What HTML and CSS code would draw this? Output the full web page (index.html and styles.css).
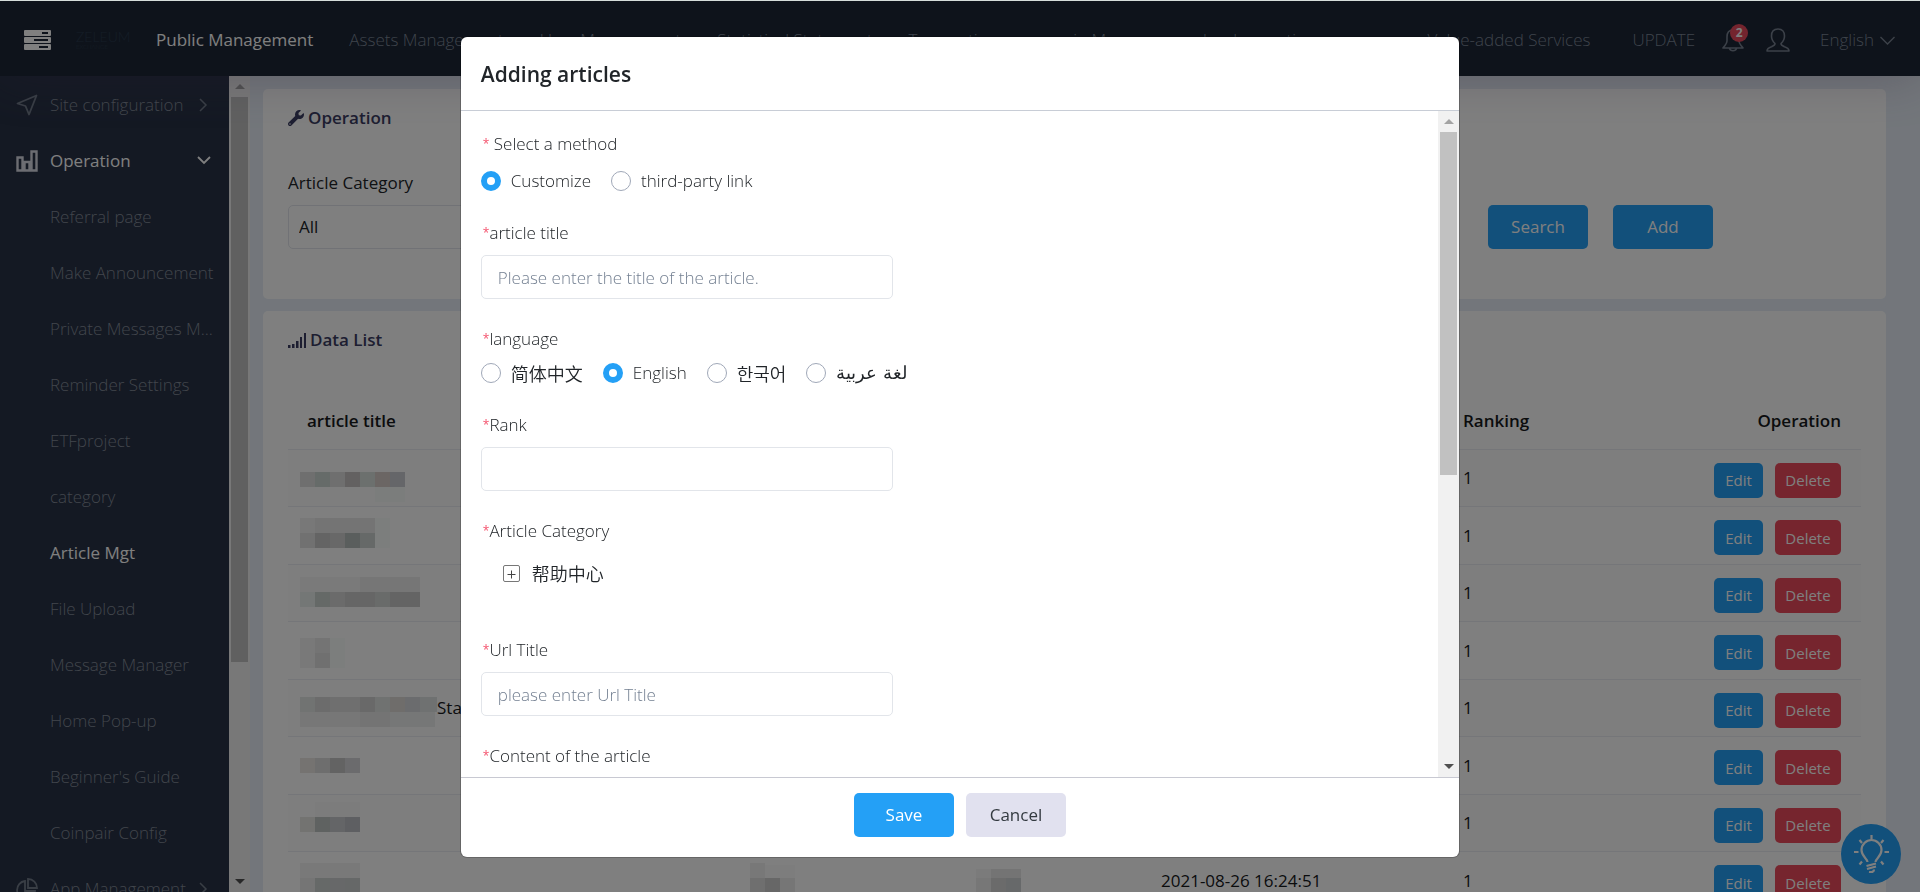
FILE: index.html
```html
<!DOCTYPE html>
<html lang="en">
<head>
<meta charset="utf-8">
<title>Article Mgt</title>
<link rel="stylesheet" href="styles.css">
</head>
<body>
<div class="app">
  <header class="topbar">
    <button class="icon-btn menu-btn" aria-label="Toggle menu">
      <svg width="27" height="20" viewBox="0 0 27 20"><rect width="27" height="6" rx="1" fill="#fff"/><rect y="7" width="27" height="6" rx="1" fill="#fff"/><rect y="14" width="27" height="6" rx="1" fill="#fff"/><path d="M18 3h6M10 10h14M15 17h9" stroke="#1d2736" stroke-width="2"/></svg>
    </button>
    <div class="brand"><span class="brand-name">ZELEUM</span><span class="brand-sub">EXCHANGE</span></div>
    <nav class="topnav">
      <a class="active" href="#">Public Management</a>
      <a href="#">Assets Management</a>
      <a href="#">User Management</a>
      <a href="#">Statistical Statement</a>
      <a href="#">Transaction</a>
      <a href="#">margin Manager</a>
      <a href="#">cloud operation</a>
    </nav>
    <nav class="topnav topnav-end">
      <a href="#">Value-added Services</a>
      <a href="#">UPDATE</a>
    </nav>
    <button class="icon-btn bell" aria-label="Notifications">
      <svg width="22" height="24" viewBox="0 0 22 24" fill="none" stroke="#788292" stroke-width="1.6" stroke-linejoin="round"><path d="M11 2C7 2 5 5 5 9v4c0 3-2 4-4 7h20c-2-3-4-4-4-7V9c0-4-2-7-6-7zM7.500 20.500c1 3 6 3 7 0"/></svg>
      <span class="badge">2</span>
    </button>
    <button class="icon-btn user" aria-label="Account">
      <svg width="24" height="24" viewBox="0 0 24 24" fill="none" stroke="#788292" stroke-width="1.6" stroke-linejoin="round"><path d="M12 1C7.500 1 5.500 4 5.500 8c0 3 1.200 5.500 3.500 7.500 0 2-1 2.300-3.500 3.200C2.500 19.700 1 20.500 1 23h22c0-2.500-1.500-3.300-4.500-4.300-2.500-.9-3.500-1.200-3.500-3.200 2.300-2 3.500-4.500 3.500-7.500 0-4-2-7-6.500-7z"/></svg>
    </button>
    <button class="icon-btn lang">English
      <svg width="15" height="9" viewBox="0 0 15 9" fill="none" stroke="#788292" stroke-width="1.400"><path d="M.5 1l7 7 7-7"/></svg>
    </button>
  </header>

  <div class="shell">
    <aside class="sidebar">
      <ul class="menu">
        <li><a href="#"><svg class="mi" width="22" height="22" viewBox="0 0 22 22" fill="none" stroke="#727c8b" stroke-width="1.800" stroke-linejoin="round"><path d="M20.500 1.500L1.500 9.500l8 2.500 3.500 8.500z"/></svg><span>Site configuration</span><svg class="chev" width="9" height="14" viewBox="0 0 9 14" fill="none" stroke="#727c8b" stroke-width="1.500"><path d="M1 1l6 6-6 6"/></svg></a></li>
        <li><a class="active" href="#"><svg class="mi" width="22" height="22" viewBox="0 0 22 22" fill="none" stroke="#d9dbe4" stroke-width="2.400"><path d="M1.500 7.500h5v13h-5zM8.500 12h5v8.500h-5zM15.500 1.500h5v19h-5z"/></svg><span>Operation</span><svg class="chev" width="14" height="9" viewBox="0 0 14 9" fill="none" stroke="#fff" stroke-width="1.800"><path d="M1 1l6 6 6-6"/></svg></a></li>
        <li><a class="sub" href="#"><span>Referral page</span></a></li>
        <li><a class="sub" href="#"><span>Make Announcement</span></a></li>
        <li><a class="sub" href="#"><span>Private Messages M...</span></a></li>
        <li><a class="sub" href="#"><span>Reminder Settings</span></a></li>
        <li><a class="sub" href="#"><span>ETFproject</span></a></li>
        <li><a class="sub" href="#"><span>category</span></a></li>
        <li><a class="sub active" href="#"><span>Article Mgt</span></a></li>
        <li><a class="sub" href="#"><span>File Upload</span></a></li>
        <li><a class="sub" href="#"><span>Message Manager</span></a></li>
        <li><a class="sub" href="#"><span>Home Pop-up</span></a></li>
        <li><a class="sub" href="#"><span>Beginner's Guide</span></a></li>
        <li><a class="sub" href="#"><span>Coinpair Config</span></a></li>
        <li><a href="#"><svg class="mi" width="22" height="22" viewBox="0 0 22 22" fill="none" stroke="#727c8b" stroke-width="1.800"><path d="M9 3a9 9 0 1 0 10 10H9zM12 1v9h9a9 9 0 0 0-9-9z"/></svg><span>App Management</span><svg class="chev" width="9" height="14" viewBox="0 0 9 14" fill="none" stroke="#727c8b" stroke-width="1.500"><path d="M1 1l6 6-6 6"/></svg></a></li>
      </ul>
      <div class="scrollbar" aria-hidden="true"><i class="arrow up"></i><i class="track"><i class="thumb side-thumb"></i></i><i class="arrow down"></i></div>
    </aside>

    <main class="content">
      <section class="card filter-card">
        <h2><svg width="16" height="16" viewBox="0 0 512 512" fill="#3b3d63"><path d="M507.700 109.100c-2.200-9-13.500-12.100-20.100-5.500l-74.400 74.400-67.900-11.300L334 98.900l74.400-74.400c6.600-6.600 3.400-17.900-5.700-20.200-47.400-11.700-99.600.9-136.600 37.900-39.600 39.600-50.500 97.100-34.100 147.200L18.700 402.800c-25 25-25 65.500 0 90.500s65.500 25 90.500 0l213.200-213.200c50.100 16.700 107.500 5.700 147.400-34.200 37.100-37.100 49.700-89.300 37.900-136.800zM64 472a24 24 0 1 1 0-48 24 24 0 0 1 0 48z"/></svg>Operation</h2>
        <div class="filters">
          <div class="filter">
            <label for="cat">Article Category</label>
            <select id="cat"><option>All</option></select>
          </div>
          <div class="filter-actions">
            <button class="btn primary">Search</button>
            <button class="btn primary">Add</button>
          </div>
        </div>
      </section>

      <section class="card list-card">
        <h2><svg width="18" height="15" viewBox="0 0 18 15" fill="#3b3d63"><path d="M0 12h2.500v3H0zM4 11h2.500v4H4zM8 8h2.500v7H8zM12 4h2v11h-2zM16 0h2v15h-2z"/></svg>Data List</h2>
        <table>
          <colgroup><col class="c-title"><col class="c-a"><col class="c-b"><col class="c-date"><col class="c-rank"><col class="c-op"></colgroup>
          <thead><tr><th>article title</th><th></th><th></th><th></th><th class="rank">Ranking</th><th class="op">Operation</th></tr></thead>
          <tbody>
            <tr><td><svg class="mosaic" width="135" height="56"><path fill="#dedede" d="M0 22h15v15H0zM30 22h15v15H30z"/><path fill="#ccd6d2" d="M15 22h15v15H15z"/><path fill="#c6c2c2" d="M45 22h15v15H45z"/><path fill="#d8e0dc" d="M60 22h15v15H60z"/><path fill="#d6ccc8" d="M75 22h15v15H75z"/><path fill="#cbccd2" d="M90 22h15v15H90z"/><path fill="#f6fbf8" d="M75 37h30v15H75z"/></svg></td><td></td><td></td><td></td><td class="rank">1</td><td class="op"><button class="btn small primary">Edit</button><button class="btn small danger">Delete</button></td></tr>
            <tr><td><svg class="mosaic" width="135" height="56"><path fill="#f0f0f0" d="M0 10h15v15H0z"/><path fill="#e8e8e8" d="M15 10h60v15H15z"/><path fill="#e2e2e2" d="M0 25h15v15H0z"/><path fill="#c8c8c8" d="M15 25h15v15H15z"/><path fill="#d0d0d0" d="M30 25h15v15H30z"/><path fill="#b4bcba" d="M45 25h15v15H45z"/><path fill="#ccd2d0" d="M60 25h15v15H60z"/><path fill="#f8fcfa" d="M75 10h15v30H75z"/></svg></td><td></td><td></td><td></td><td class="rank">1</td><td class="op"><button class="btn small primary">Edit</button><button class="btn small danger">Delete</button></td></tr>
            <tr><td><svg class="mosaic" width="135" height="56"><path fill="#f4f4f4" d="M0 12h60v15H0z"/><path fill="#ececec" d="M60 12h60v15H60z"/><path fill="#e8eeec" d="M0 27h15v15H0z"/><path fill="#cad2ce" d="M15 27h15v15H15z"/><path fill="#d6d6d6" d="M30 27h15v15H30z"/><path fill="#cccccc" d="M45 27h30v15H45z"/><path fill="#d2d6d4" d="M75 27h15v15H75z"/><path fill="#c8c8c8" d="M90 27h30v15H90z"/></svg></td><td></td><td></td><td></td><td class="rank">1</td><td class="op"><button class="btn small primary">Edit</button><button class="btn small danger">Delete</button></td></tr>
            <tr><td><svg class="mosaic" width="135" height="56"><path fill="#f2f2f2" d="M0 15h15v30H0z"/><path fill="#e8e8e8" d="M15 15h15v15H15z"/><path fill="#e0e0e0" d="M15 30h15v15H15z"/><path fill="#f8fdfb" d="M30 15h15v30H30z"/></svg></td><td></td><td></td><td></td><td class="rank">1</td><td class="op"><button class="btn small primary">Edit</button><button class="btn small danger">Delete</button></td></tr>
            <tr><td><div class="named"><svg class="mosaic" width="137" height="56"><path fill="#e2e6e4" d="M0 17h15v15H0z"/><path fill="#d8d8d8" d="M15 17h15v15H15z"/><path fill="#dedede" d="M30 17h30v15H30z"/><path fill="#d2d2d2" d="M60 17h15v15H60z"/><path fill="#e0e4e2" d="M75 17h15v15H75z"/><path fill="#dedad6" d="M90 17h15v15H90z"/><path fill="#d6d8dc" d="M105 17h15v15H105z"/><path fill="#dfe3e2" d="M120 17h17v15H120z"/><path fill="#eeeeee" d="M0 32h60v15H0z"/><path fill="#e8e8e8" d="M60 32h30v15H60z"/><path fill="#ecefee" d="M90 32h45v15H90z"/></svg>Start</div></td><td></td><td></td><td></td><td class="rank">1</td><td class="op"><button class="btn small primary">Edit</button><button class="btn small danger">Delete</button></td></tr>
            <tr><td><svg class="mosaic" width="135" height="56"><path fill="#eae6e2" d="M0 20h15v15H0z"/><path fill="#dcdcdc" d="M15 20h15v15H15z"/><path fill="#c6c6c6" d="M30 20h15v15H30z"/><path fill="#d6d7da" d="M45 20h15v15H45z"/></svg></td><td></td><td></td><td></td><td class="rank">1</td><td class="op"><button class="btn small primary">Edit</button><button class="btn small danger">Delete</button></td></tr>
            <tr><td><svg class="mosaic" width="135" height="56"><path fill="#f8f8f8" d="M15 7h45v15H15z"/><path fill="#e6e6e2" d="M0 22h15v15H0z"/><path fill="#bec4c2" d="M15 22h15v15H15z"/><path fill="#c8cacf" d="M30 22h15v15H30z"/><path fill="#bcbfc4" d="M45 22h15v15H45z"/></svg></td><td></td><td></td><td></td><td class="rank">1</td><td class="op"><button class="btn small primary">Edit</button><button class="btn small danger">Delete</button></td></tr>
            <tr><td><svg class="mosaic" width="135" height="56"><path fill="#f2f2f2" d="M0 10h60v15H0z"/><path fill="#eaeaea" d="M0 25h15v15H0z"/><path fill="#ccd2d0" d="M15 25h15v15H15z"/><path fill="#cfd0d3" d="M30 25h15v15H30z"/><path fill="#cdd0d0" d="M45 25h15v15H45z"/></svg></td><td><svg class="mosaic" width="60" height="56"><path fill="#f0f0f0" d="M0 10h15v15H0z"/><path fill="#fafafa" d="M15 12h30v13H15z"/><path fill="#dedede" d="M0 25h15v15H0z"/><path fill="#cecece" d="M15 25h15v15H15z"/><path fill="#ececec" d="M30 25h15v15H30z"/></svg></td><td><svg class="mosaic" width="60" height="56"><path fill="#f6f6f6" d="M0 16h15v9H0z"/><path fill="#e8e8e8" d="M15 16h30v9H15z"/><path fill="#efefef" d="M0 25h15v15H0z"/><path fill="#d6d6d6" d="M15 25h15v15H15z"/><path fill="#ced2d5" d="M30 25h15v15H30z"/></svg></td><td>2021-08-26 16:24:51</td><td class="rank">1</td><td class="op"><button class="btn small primary">Edit</button><button class="btn small danger">Delete</button></td></tr>
          </tbody>
        </table>
      </section>
    </main>
  </div>
  <button class="tip" aria-label="Tips">
    <svg width="36" height="38" viewBox="0 0 36 38" fill="none" stroke="#fff" stroke-width="2.200"><path d="M14.500 27c0-3.500-6-5.500-6-12a10 10 0 0 1 20 0c0 6.500-6 8.500-6 12M18.500 0v4M1 17h4.500M31.500 17H36M6.500 5l2.500 3M30.500 5L28 8M6.500 29.500l2.500-3M30.500 29.500l-2.500-3M13.500 31l9.500-2.500M14 34l9-2.500M16 37c3 .5 5-.5 5-2.500"/></svg>
  </button>
</div>

<div class="overlay">
  <form class="modal" role="dialog" aria-labelledby="dlg-title">
    <header class="modal-head"><h1 id="dlg-title">Adding articles</h1></header>
    <div class="modal-body">
      <div class="fields">
        <fieldset class="field method">
          <legend><b>*</b> Select a method</legend>
          <div class="radios">
            <label><input type="radio" name="method" checked>Customize</label>
            <label><input type="radio" name="method">third-party link</label>
          </div>
        </fieldset>
        <div class="field">
          <label class="name" for="f-title"><b>*</b>article title</label>
          <input id="f-title" type="text" placeholder="Please enter the title of the article.">
        </div>
        <fieldset class="field">
          <legend><b>*</b>language</legend>
          <div class="radios">
            <label lang="zh"><input type="radio" name="lang">简体中文</label>
            <label><input type="radio" name="lang" checked>English</label>
            <label lang="ko"><input type="radio" name="lang">한국어</label>
            <label><input type="radio" name="lang"><span lang="ar" dir="rtl">لغة عربية</span></label>
          </div>
        </fieldset>
        <div class="field">
          <label class="name" for="f-rank"><b>*</b>Rank</label>
          <input id="f-rank" type="text">
        </div>
        <div class="field tree-field">
          <div class="name"><b>*</b>Article Category</div>
          <div class="tree"><button type="button" class="expand" aria-label="Expand"><svg width="17" height="17" viewBox="0 0 17 17" fill="none" stroke="#444"><rect x=".5" y=".5" width="16" height="16" rx="1.500" stroke="#777"/><path d="M4.500 9.500h8M8.500 5.500v8"/></svg></button><span lang="zh">帮助中心</span></div>
        </div>
        <div class="field">
          <label class="name" for="f-url"><b>*</b>Url Title</label>
          <input id="f-url" type="text" placeholder="please enter Url Title">
        </div>
        <div class="field"><div class="name"><b>*</b>Content of the article</div></div>
      </div>
      <div class="scrollbar" aria-hidden="true"><i class="arrow up"></i><i class="track"><i class="thumb modal-thumb"></i></i><i class="arrow down"></i></div>
    </div>
    <footer class="modal-foot">
      <button type="button" class="btn primary save">Save</button>
      <button type="button" class="btn cancel">Cancel</button>
    </footer>
  </form>
</div>
</body>
</html>
```

FILE: styles.css
```css
* { box-sizing: border-box; }

body {
  margin: 0;
  font: 17px/24px "Open Sans", "Noto Sans", "Noto Sans CJK SC", sans-serif;
  color: #212529;
}

button, input, select { font: inherit; color: inherit; }
button { cursor: pointer; }
a { color: inherit; text-decoration: none; }
h1, h2 { margin: 0; }

.app {
  display: flex;
  flex-direction: column;
  height: 100vh;
  overflow: hidden;
  background: #e6edf6;
}

/* Top bar */
.topbar {
  display: flex;
  align-items: center;
  flex: none;
  height: 76px;
  padding: 4px 25px 0 24px;
  background: #1d2736;
  color: #7c8696;
  box-shadow: 0 0 50px rgba(82, 63, 105, .3);
  position: relative;
  z-index: 1;
  white-space: nowrap;
  font-weight: 350;
}
.icon-btn {
  display: flex;
  align-items: center;
  padding: 0;
  border: 0;
  background: none;
}
.brand {
  display: flex;
  flex-direction: column;
  width: 80px;
  margin-left: 25px;
  color: #2a3b50;
}
.brand-name { font: 300 14px/14px Lato, sans-serif; }
.brand-sub { font: 300 6px/6px Lato, sans-serif; }
.topnav { display: flex; gap: 36px; }
.topnav .active { color: #fff; font-weight: 400; }
.topnav-end { margin-left: auto; gap: 42px; }
.bell { position: relative; margin-left: 27px; }
.badge {
  position: absolute;
  top: -4px;
  right: -4px;
  width: 18px;
  height: 18px;
  border-radius: 50%;
  background: #e8495c;
  color: #fff;
  font-size: 12px;
  font-weight: 700;
  line-height: 18px;
}
.user { margin-left: 22px; }
.lang { gap: 6px; margin-left: 30px; }

/* Sidebar */
.shell { display: flex; flex: 1; min-height: 0; }
.sidebar { display: flex; flex: none; width: 250px; background: #283246; }
.menu {
  flex: 1;
  min-width: 0;
  margin: 0;
  padding: 0;
  list-style: none;
  overflow: hidden;
  color: #838b98;
  font-weight: 350;
}
.menu a {
  display: flex;
  align-items: center;
  height: 56px;
  padding: 1px 14px 0 16px;
}
.menu .mi { flex: none; margin-right: 12px; }
.menu a > span { flex: 1; white-space: nowrap; }
.menu .chev { flex: none; margin: 0 7px; }
.menu .active .chev { margin: 0 4px; }
.menu .sub { height: 56px; padding: 2px 0 0 50px; }
.menu .active { color: #fff; font-weight: 400; }

/* Scrollbars */
.scrollbar {
  display: flex;
  flex-direction: column;
  flex: none;
  width: 21px;
  background: #f1f1f1;
}
.arrow { height: 21px; display: flex; align-items: center; justify-content: center; }
.arrow::before { content: ""; border: 5px solid transparent; border-top-width: 0; border-bottom: 5px solid #a3a3a3; }
.arrow.down::before { border-width: 5px 5px 0; border-top-color: #505050; }
.track { flex: 1; padding: 0 2px; }
.thumb { display: block; background: #c1c1c1; }
.side-thumb { height: 73%; }
.modal-thumb { height: 55%; }

/* Main content */
.content {
  flex: 1;
  display: flex;
  flex-direction: column;
  gap: 12px;
  min-width: 0;
  padding: 13px 34px 0 13px;
}
.card { flex: none; padding: 17px 25px 0; border-radius: 5px; background: #fff; }
.card h2 {
  display: flex;
  align-items: center;
  gap: 4px;
  font-size: 17px;
  font-weight: 600;
  line-height: 24px;
  color: #3b3d63;
}
.filter-card { padding-bottom: 50px; }
.filters { display: flex; align-items: flex-end; justify-content: space-between; margin-top: 41px; }
.filter { display: flex; flex-direction: column; gap: 10px; width: 280px; }
.filter select {
  height: 44px;
  padding: 0 10px;
  border: 1px solid #e2e5ec;
  border-radius: 5px;
  background: #fff;
  appearance: none;
}
.filter-actions { display: flex; gap: 25px; margin-right: 148px; }

.btn { height: 44px; width: 100px; padding: 0; border: 0; border-radius: 5px; }
.primary { background: #24a0f6; color: #fff; }
.danger { background: #ed4b5c; color: #fff; }
.small { height: 35px; font-size: 15px; margin-left: 12px; }
.small.danger { width: 66px; }
.small.primary { width: 49px; }

table { width: 100%; margin-top: 40px; border-spacing: 0; table-layout: fixed; color: #16181b; }
.c-title { width: 450px; }
.c-a { width: 226px; }
.c-b { width: 185px; }
.c-date { width: 302px; }
th { height: 57px; padding: 0 19px; text-align: left; font-weight: 600; }
td { height: 57px; padding: 0 12px; border-top: 1px solid #ebedf2; white-space: nowrap; }
tbody tr:nth-child(even) td { height: 58px; }
tbody tr:nth-child(odd) td { background: #fcfcfd; }
.rank { padding: 0 12px; }
.op { padding: 4px 20px 0; text-align: right; }
th.op { padding-top: 0; }
.mosaic { display: block; flex: none; }
.named { display: flex; align-items: center; }

.tip {
  position: fixed;
  right: 19px;
  bottom: 8px;
  z-index: 2;
  display: flex;
  align-items: center;
  justify-content: center;
  width: 60px;
  height: 60px;
  padding: 0;
  border: 0;
  border-radius: 50%;
  background: #24a0f6;
}

/* Dialog */
.overlay {
  position: fixed;
  inset: 0;
  z-index: 10;
  display: flex;
  justify-content: center;
  padding: 36px 0 35px;
  border-top: 1px solid #d5ddda;
  background: rgba(0, 0, 0, .5);
}
.modal {
  display: flex;
  flex-direction: column;
  width: 52%;
  border-radius: 6px;
  background: #fff;
  box-shadow: 0 0 0 1px rgba(0, 0, 0, .2);
  overflow: hidden;
}
.modal-head { padding: 22px 20px 21px; border-bottom: 1px solid #c8cdd6; }
.modal-head h1 { font-size: 21px; line-height: 30px; font-weight: 600; }
.modal-body { display: flex; flex: 1; min-height: 0; overflow: hidden; color: #212529; font-weight: 350; }
.fields { display: flex; flex-direction: column; gap: 28px; flex: 1; padding: 21px 20px 0; }
.field { display: flex; flex-direction: column; flex: none; gap: 10px; margin: 0; padding: 0; border: 0; min-width: 0; }
.field .name, .field legend { display: block; padding: 0 2px; }
.field legend { margin-bottom: 10px; }
.method legend { margin-bottom: 13px; }
.field b { color: #f4516c; font-size: 12px; line-height: 16px; font-weight: 400; vertical-align: 2px; }
.field input[type="text"] {
  width: 44%;
  min-width: 280px;
  height: 44px;
  padding: 0 16px;
  border: 1px solid #e2e5ea;
  border-radius: 5px;
  background: #fff;
}
.field input::placeholder { color: #748092; opacity: 1; }
.radios { display: flex; gap: 20px; }
.radios label { display: flex; align-items: center; gap: 10px; }
.radios input {
  appearance: none;
  width: 20px;
  height: 20px;
  margin: 0;
  border: 1px solid #a0a8b8;
  border-radius: 50%;
  background: #fff;
}
.radios input:checked { border: 6px solid #24a0f6; }
[lang="zh"], [lang="ko"], [lang="ar"] { font-size: 18px; }
[lang="zh"] { font-family: "Noto Sans CJK SC", sans-serif; }
[lang="ko"] { font-family: "Noto Sans CJK KR", sans-serif; }
[lang="ar"] { font-family: "DejaVu Sans", sans-serif; }
.tree-field { gap: 18px; padding-bottom: 25px; }
.tree { display: flex; align-items: center; gap: 12px; padding-left: 22px; }
.expand { display: flex; padding: 0; border: 0; background: none; }
.modal-foot {
  display: flex;
  justify-content: center;
  gap: 12px;
  padding: 15px 0 20px;
  border-top: 1px solid #c8c9d2;
}
.save { font-weight: 500; }
.cancel { background: #e1e1ef; color: #333a40; }
```
